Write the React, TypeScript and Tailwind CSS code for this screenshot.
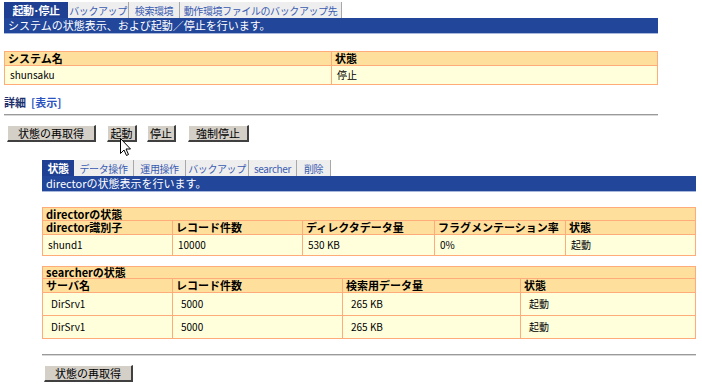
import React from 'react';

const FONT = '"MS PGothic", "Noto Sans CJK JP", "Liberation Sans", sans-serif';

interface TabsProps {
  items: { label: string; w: number }[];
  active: number;
}

function Tabs({ items, active }: TabsProps) {
  return (
    <div className="flex h-[16px]">
      {items.map((t, i) => (
        <div
          key={t.label}
          style={{ width: t.w }}
          className={
            i === active
              ? 'flex items-center justify-center whitespace-nowrap bg-[#1e3f92] text-[11px] font-bold tracking-[-0.5px] text-white'
              : 'flex items-center justify-center whitespace-nowrap border-r border-[#a8a8a8] bg-[#eeeeee] text-[10px] tracking-[-0.4px] text-[#3a5bb0]'
          }
        >
          {t.label}
        </div>
      ))}
    </div>
  );
}

function Bar({ text }: { text: string }) {
  return (
    <div className="flex h-[16px] items-center border-b border-[#a8b8dc] bg-[#21469a] pl-[4px] text-[11px] text-white">
      {text}
    </div>
  );
}

function Button({ label, w }: { label: string; w: number }) {
  return (
    <button
      style={{ width: w }}
      className="flex h-[17px] items-center justify-center border-t border-l border-b-2 border-r-2 border-t-white border-l-white border-b-[#404040] border-r-[#404040] bg-[#d4d0c8] text-[11px] text-black"
    >
      {label}
    </button>
  );
}

const th = 'border border-[#ffac7a] bg-[#ffdf9c] px-[3px] py-0 text-left text-[11px] font-bold text-black leading-[11px]';
const td = 'border border-[#ffac7a] bg-[#ffffdc] px-[5px] py-0 text-left text-[10px] text-black leading-[12px]';

export default function App() {
  return (
    <div className="h-[389px] w-[702px] overflow-hidden bg-white" style={{ fontFamily: FONT }}>
      {/* 上部 */}
      <div className="ml-[4px] w-[654px] pt-[2px]">
        <Tabs
          active={0}
          items={[
            { label: '起動･停止', w: 64 },
            { label: 'バックアップ', w: 61 },
            { label: '検索環境', w: 51 },
            { label: '動作環境ファイルのバックアップ先', w: 162 },
          ]}
        />
        <Bar text="システムの状態表示、および起動／停止を行います。" />

        <table className="mt-[17px] w-full border-collapse">
          <tbody>
            <tr className="h-[14px]">
              <th className={th} style={{ width: 327 }}>システム名</th>
              <th className={th}>状態</th>
            </tr>
            <tr className="h-[19px]">
              <td className={td}>shunsaku</td>
              <td className={td}>停止</td>
            </tr>
          </tbody>
        </table>

        <div className="mt-[10px] flex h-[14px] items-center gap-[5px] text-[11px] font-bold">
          <span className="text-[#1e2f6e]">詳細</span>
          <span className="text-[#2a52c0]">[表示]</span>
        </div>
        <div className="mt-[5px] h-[2px] border-t border-[#9a9a9a] bg-[#d8d8d8]" />

        <div className="relative mt-[9px] flex h-[18px] items-start pl-[3px]">
          <Button label="状態の再取得" w={89} />
          <div className="ml-[11px]">
            <Button label="起動" w={30} />
          </div>
          <div className="ml-[10px]">
            <Button label="停止" w={29} />
          </div>
          <div className="ml-[12px]">
            <Button label="強制停止" w={61} />
          </div>
          <svg
            className="absolute left-[116px] top-[13px]"
            width="12"
            height="19"
            viewBox="0 0 12 19"
          >
            <path
              d="M0.5 0.5 L0.5 15.5 L4 12 L6.5 17.5 L8.5 16.5 L6 11 L10.5 11 Z"
              fill="white"
              stroke="black"
              strokeWidth="1"
              strokeLinejoin="miter"
            />
          </svg>
        </div>
      </div>

      {/* director / searcher */}
      <div className="ml-[42px] mt-[17px] w-[654px]">
        <Tabs
          active={0}
          items={[
            { label: '状態', w: 32 },
            { label: 'データ操作', w: 60 },
            { label: '運用操作', w: 52 },
            { label: 'バックアップ', w: 63 },
            { label: 'searcher', w: 48 },
            { label: '削除', w: 34 },
          ]}
        />
        <Bar text="directorの状態表示を行います。" />

        <table className="mt-[15px] w-full border-collapse">
          <tbody>
            <tr className="h-[13px]">
              <th className={th} colSpan={5}>directorの状態</th>
            </tr>
            <tr className="h-[14px]">
              <th className={th} style={{ width: 130 }}>director識別子</th>
              <th className={th} style={{ width: 130 }}>レコード件数</th>
              <th className={th} style={{ width: 132 }}>ディレクタデータ量</th>
              <th className={th} style={{ width: 131 }}>フラグメンテーション率</th>
              <th className={th}>状態</th>
            </tr>
            <tr className="h-[21px]">
              <td className={td}>shund1</td>
              <td className={td}>10000</td>
              <td className={td}>530 KB</td>
              <td className={td}>0%</td>
              <td className={td}>起動</td>
            </tr>
          </tbody>
        </table>

        <table className="mt-[10px] w-full border-collapse">
          <tbody>
            <tr className="h-[12px]">
              <th className={th} colSpan={4}>searcherの状態</th>
            </tr>
            <tr className="h-[14px]">
              <th className={th} style={{ width: 130 }}>サーバ名</th>
              <th className={th} style={{ width: 170 }}>レコード件数</th>
              <th className={th} style={{ width: 178 }}>検索用データ量</th>
              <th className={th}>状態</th>
            </tr>
            {[0, 1].map((i) => (
              <tr key={i} className="h-[23px]">
                <td className={td + ' pl-[8px]'}>DirSrv1</td>
                <td className={td + ' pl-[8px]'}>5000</td>
                <td className={td + ' pl-[8px]'}>265 KB</td>
                <td className={td + ' pl-[8px]'}>起動</td>
              </tr>
            ))}
          </tbody>
        </table>

        <div className="mt-[15px] h-[2px] border-t border-[#9a9a9a] bg-[#d8d8d8]" />
        <div className="mt-[9px] pl-[2px]">
          <Button label="状態の再取得" w={89} />
        </div>
      </div>
    </div>
  );
}
